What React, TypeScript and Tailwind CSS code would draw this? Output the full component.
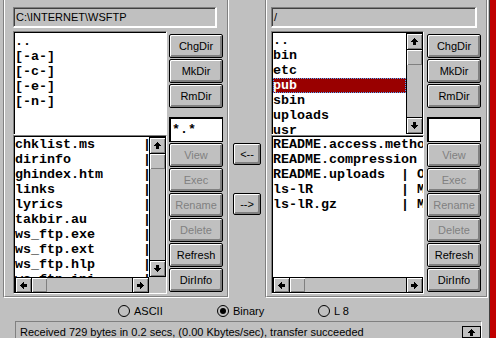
import React from "react";

type Dir = "up" | "down" | "left" | "right";

const leftDirs = ["..", "[-a-]", "[-c-]", "[-e-]", "[-n-]"];
const leftFiles = [
  "chklist.ms",
  "dirinfo",
  "ghindex.htm",
  "links",
  "lyrics",
  "takbir.au",
  "ws_ftp.exe",
  "ws_ftp.ext",
  "ws_ftp.hlp",
  "ws_ftp.ini",
];
const rightDirs = ["..", "bin", "etc", "pub", "sbin", "uploads", "usr"];
// listing lines are cut where the box ends
const rightFiles = [
  "README.access.methods | O",
  "README.compression | O",
  "README.uploads".padEnd(16) + "| O",
  "ls-lR".padEnd(16) + "| M",
  "ls-lR.gz".padEnd(16) + "| M",
].map((l) => l.slice(0, 19));

const mono =
  "font-['Liberation_Mono','Courier_New',monospace] font-bold text-[13.33px] leading-[15px] whitespace-pre";
const bevel = "shadow-[inset_1px_1px_0_#fff,inset_-1px_-1px_0_#808080]";

const Arrow = ({ dir }: { dir: Dir }) => {
  const rot = { up: "", down: "rotate-180", left: "-rotate-90", right: "rotate-90" }[dir];
  return (
    <svg width="7" height="7" viewBox="0 0 7 7" className={rot} shapeRendering="crispEdges">
      <rect x="3" y="0" width="1" height="1" fill="#000" />
      <rect x="2" y="1" width="3" height="1" fill="#000" />
      <rect x="1" y="2" width="5" height="1" fill="#000" />
      <rect x="0" y="3" width="7" height="1" fill="#000" />
      <rect x="2" y="4" width="3" height="3" fill="#000" />
    </svg>
  );
};

const ScrollBtn = ({ dir, className = "" }: { dir: Dir; className?: string }) => (
  <div className={`flex shrink-0 items-center justify-center border border-black bg-[#c0c0c0] ${bevel} ${className}`}>
    <Arrow dir={dir} />
  </div>
);

const VScroll = () => (
  <div className="flex h-full w-[17px] shrink-0 flex-col">
    <ScrollBtn dir="up" className="h-[17px]" />
    <div className={`-mt-px h-[17px] shrink-0 border border-black bg-[#c0c0c0] ${bevel}`} />
    <div className="-mt-px flex-1 border-x border-black bg-[#c0c0c0]" />
    <ScrollBtn dir="down" className="h-[17px]" />
  </div>
);

const HScroll = () => (
  <div className="flex h-full flex-1">
    <ScrollBtn dir="left" className="w-[17px]" />
    <div className={`-ml-px w-[17px] shrink-0 border border-black bg-[#c0c0c0] ${bevel}`} />
    <div className="-ml-px flex-1 border-y border-black bg-[#c0c0c0]" />
    <ScrollBtn dir="right" className="w-[17px]" />
  </div>
);

const Btn = ({ label, disabled = false, className = "" }: { label: string; disabled?: boolean; className?: string }) => (
  <div
    className={`flex h-[24px] shrink-0 items-center justify-center rounded-[2px] border border-black bg-[#c0c0c0] shadow-[inset_1px_1px_0_#fff,inset_-2px_-2px_0_#808080] ${
      disabled ? "text-[#808080]" : "text-black"
    } ${className}`}
  >
    {label}
  </div>
);

const ListBox = ({ className = "", children }: { className?: string; children: React.ReactNode }) => (
  <div className={`border border-t-[#808080] border-l-[#808080] border-b-white border-r-white bg-white ${className}`}>
    <div className="flex h-full flex-col overflow-hidden border-l border-t border-black">{children}</div>
  </div>
);

const PathBox = ({ text, className = "" }: { text: string; className?: string }) => (
  <div className={`h-[21px] border border-b-2 border-r-2 border-t-[#808080] border-l-[#808080] border-b-white border-r-white ${className}`}>
    <div className="flex h-full items-center border-l border-t border-[#404040] pl-px">{text}</div>
  </div>
);

const Group = ({ className, inner, children }: { className: string; inner: string; children: React.ReactNode }) => (
  <div className={`border-x border-b border-l-[#808080] border-r-white border-b-white ${className}`}>
    <div className={`h-full border-x border-b border-l-white border-r-[#808080] border-b-[#808080] pt-[7px] ${inner}`}>
      {children}
    </div>
  </div>
);

const Buttons = ({ filter }: { filter: string }) => (
  <div className="flex w-[54px] shrink-0 flex-col gap-px pt-[3px]">
    <Btn label="ChgDir" />
    <Btn label="MkDir" />
    <Btn label="RmDir" />
    <div className={`${mono} mt-[8px] h-[25px] border border-black bg-white pl-[2px] pt-[4px] shadow-[inset_1px_1px_0_#000]`}>
      {filter}
    </div>
    <Btn label="View" disabled />
    <Btn label="Exec" disabled />
    <Btn label="Rename" disabled />
    <Btn label="Delete" disabled />
    <Btn label="Refresh" />
    <Btn label="DirInfo" />
  </div>
);

const Radio = ({ label, checked = false, className = "" }: { label: string; checked?: boolean; className?: string }) => (
  <div className={`flex items-center gap-[4px] ${className}`}>
    <svg width="12" height="12" viewBox="0 0 12 12">
      <circle cx="6" cy="6" r="5.5" fill="none" stroke="#000" />
      {checked && <circle cx="6" cy="6" r="3" fill="#000" />}
    </svg>
    <span>{label}</span>
  </div>
);

export default function App() {
  return (
    <div className="flex h-[338px] w-[496px] overflow-hidden bg-[#c0c0c0] font-['Liberation_Sans',Arial,sans-serif] text-[11px] leading-[13px] text-black">
      <div className="flex w-[489px] shrink-0 flex-col">
        <div className="flex h-[298px] shrink-0 pl-[3px]">
          {/* local side */}
          <Group className="w-[226px]" inner="pl-[8px]">
            <PathBox text={"C:\\INTERNET\\WSFTP"} className="w-[204px]" />
            <div className="mt-[3px] flex gap-[2px]">
              <div className="flex w-[154px] flex-col">
                <ListBox className="h-[104px]">
                  <div className={`${mono} pt-px`}>
                    {leftDirs.map((d) => (
                      <div key={d}>{d}</div>
                    ))}
                  </div>
                </ListBox>
                <ListBox className="h-[159px]">
                  <div className="flex h-[140px] shrink-0">
                    <div className={`${mono} flex-1 overflow-hidden`}>
                      {leftFiles.map((f) => (
                        <div key={f}>{f.padEnd(16) + "|"}</div>
                      ))}
                    </div>
                    <VScroll />
                  </div>
                  <div className="flex h-[16px] shrink-0">
                    <HScroll />
                    <div className="w-[17px] bg-[#c0c0c0]" />
                  </div>
                </ListBox>
              </div>
              <Buttons filter="*.*" />
            </div>
          </Group>

          {/* transfer buttons */}
          <div className="flex w-[36px] shrink-0 flex-col items-center gap-[28px] pt-[143px]">
            <Btn label="<--" className="!h-[22px] w-[28px]" />
            <Btn label="-->" className="!h-[22px] w-[28px]" />
          </div>

          {/* remote side */}
          <Group className="w-[223px]" inner="pl-[4px]">
            <PathBox text="/" className="w-[206px]" />
            <div className="mt-[3px] flex gap-[3px]">
              <div className="flex w-[153px] flex-col">
                <ListBox className="h-[104px]">
                  <div className="flex h-full">
                    <div className={`${mono} flex-1 overflow-hidden`}>
                      {rightDirs.map((d) => (
                        <div
                          key={d}
                          className={
                            d === "pub"
                              ? "bg-[#990000] text-white outline-1 outline-dotted outline-[#4da6ff] -outline-offset-1"
                              : ""
                          }
                        >
                          {d}
                        </div>
                      ))}
                    </div>
                    <VScroll />
                  </div>
                </ListBox>
                <ListBox className="h-[159px]">
                  <div className={`${mono} h-[140px] shrink-0 overflow-hidden`}>
                    {rightFiles.map((f) => (
                      <div key={f}>{f}</div>
                    ))}
                  </div>
                  <div className="flex h-[16px] shrink-0">
                    <HScroll />
                  </div>
                </ListBox>
              </div>
              <Buttons filter="" />
            </div>
          </Group>
        </div>

        {/* transfer mode */}
        <div className="flex h-[23px] shrink-0 items-center pl-[118px] pt-[3px]">
          <Radio label="ASCII" className="w-[99px]" />
          <Radio label="Binary" checked className="w-[101px]" />
          <Radio label="L 8" />
        </div>

        {/* status line */}
        <div className="ml-[15px] flex h-[20px] w-[467px] shrink-0 border-l border-r border-t border-l-[#808080] border-t-[#808080] border-r-white">
          <span className="flex-1 pl-[4px] pt-[4px]">
            Received 729 bytes in 0.2 secs, (0.00 Kbytes/sec), transfer succeeded
          </span>
          <div className="mt-[4px] flex h-[12px] w-[19px] items-center justify-center border border-black bg-[#c0c0c0]">
            <Arrow dir="up" />
          </div>
        </div>
      </div>
      <div className="w-px shrink-0 bg-[#404040]" />
      <div className="w-[6px] shrink-0 bg-[#c00000]" />
    </div>
  );
}
